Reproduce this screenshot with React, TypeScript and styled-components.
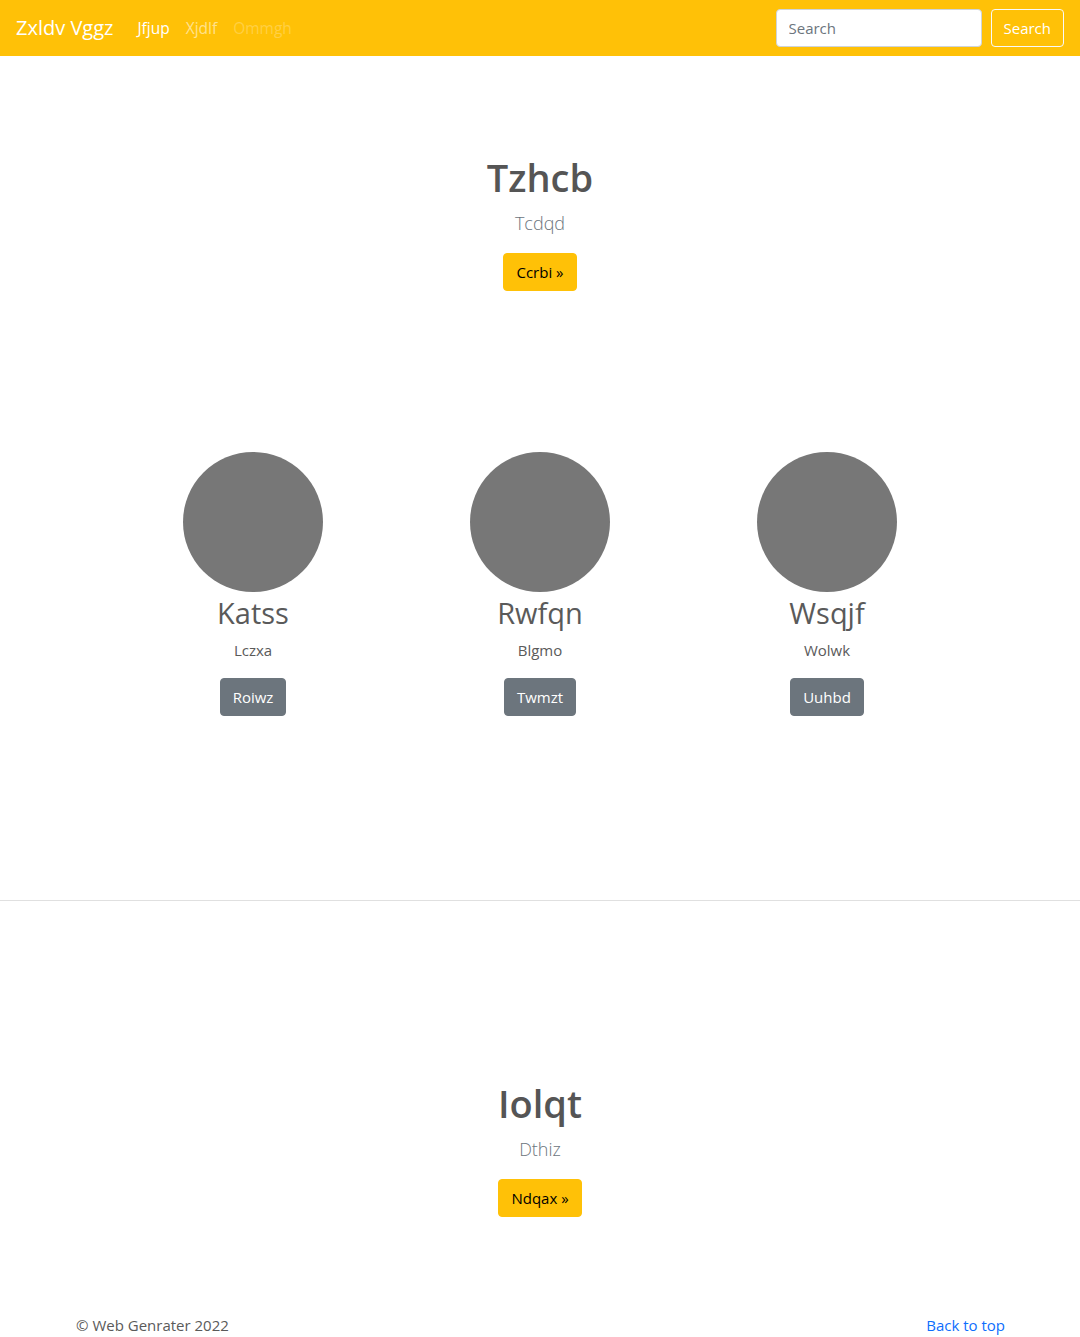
import React from "react";
import styled, { createGlobalStyle } from "styled-components";

const GlobalStyle = createGlobalStyle`
  * { box-sizing: border-box; }
  body {
    margin: 0;
    font-family: "Open Sans", "Noto Sans", sans-serif;
    font-size: 15px;
    line-height: 24px;
    color: #5a5a5a;
    background: #fff;
  }
`;

const Navbar = styled.nav`
  height: 56px;
  background-color: #ffc107;
  display: flex;
  align-items: center;
  justify-content: space-between;
  padding: 0 16px;
`;

const NavLeft = styled.div`
  display: flex;
  align-items: center;
`;

const Brand = styled.a`
  font-size: 20px;
  color: #fff;
  margin-right: 16px;
  text-decoration: none;
  line-height: 30px;
`;

const NavLink = styled.a<{ $state: "active" | "normal" | "disabled" }>`
  padding: 8px;
  font-size: 15.5px;
  text-decoration: none;
  color: ${(p) =>
    p.$state === "active"
      ? "#fff"
      : p.$state === "normal"
      ? "rgba(255,255,255,.55)"
      : "rgba(255,255,255,.25)"};
`;

const SearchForm = styled.form`
  display: flex;
  align-items: center;
  gap: 9px;
`;

const SearchInput = styled.input`
  width: 206px;
  height: 38px;
  padding: 6px 12px;
  font-family: inherit;
  font-size: 15px;
  color: #212529;
  border: 1px solid #ced4da;
  border-radius: 4px;
  background: #fff;
  &::placeholder {
    color: #6c757d;
  }
`;

const OutlineButton = styled.button`
  height: 38px;
  padding: 6px 12px;
  font-family: inherit;
  font-size: 15px;
  color: #fff;
  background: transparent;
  border: 1px solid #f8f9fa;
  border-radius: 4px;
`;

const Hero = styled.section<{ $top: number }>`
  text-align: center;
  padding-top: ${(p) => p.$top}px;
`;

const HeroTitle = styled.h1`
  margin: 0 0 8px;
  font-size: 38px;
  font-weight: 600;
  line-height: 48px;
  color: #555;
`;

const Lead = styled.p`
  margin: 0 0 16px;
  font-size: 18px;
  line-height: 28px;
  font-weight: 300;
  color: #6c757d;
`;

const Button = styled.a<{ $variant: "warning" | "secondary" }>`
  display: inline-block;
  padding: 6px 12px;
  font-size: 15px;
  line-height: 24px;
  border-radius: 4px;
  text-decoration: none;
  border: 1px solid
    ${(p) => (p.$variant === "warning" ? "#ffc107" : "#6c757d")};
  background: ${(p) => (p.$variant === "warning" ? "#ffc107" : "#6c757d")};
  color: ${(p) => (p.$variant === "warning" ? "#000" : "#fff")};
`;

const Features = styled.div`
  display: grid;
  grid-template-columns: repeat(3, 287px);
  justify-content: center;
  margin-top: 161px;
`;

const Feature = styled.div`
  display: flex;
  flex-direction: column;
  align-items: center;
  text-align: center;
`;

const Avatar = styled.div`
  width: 140px;
  height: 140px;
  border-radius: 50%;
  background: #777;
`;

const FeatureTitle = styled.h2`
  margin: 2px 0 6px;
  font-size: 29px;
  font-weight: 400;
  line-height: 38px;
  color: #5a5a5a;
`;

const FeatureText = styled.p`
  margin: 0 0 16px;
`;

const Divider = styled.hr`
  margin: 184px 0 0;
  border: 0;
  border-top: 1px solid #e0e0e0;
`;

const Footer = styled.footer`
  display: flex;
  justify-content: space-between;
  padding: 0 75px 0 76px;
  margin-top: 96px;
`;

const FooterLink = styled.a`
  color: #0d6efd;
  text-decoration: none;
`;

const features = [
  { title: "Katss", text: "Lczxa", btn: "Roiwz" },
  { title: "Rwfqn", text: "Blgmo", btn: "Twmzt" },
  { title: "Wsqjf", text: "Wolwk", btn: "Uuhbd" },
];

export default function App() {
  return (
    <>
      <GlobalStyle />
      <Navbar>
        <NavLeft>
          <Brand href="#">Zxldv Vggz</Brand>
          <NavLink $state="active" href="#">Jfjup</NavLink>
          <NavLink $state="normal" href="#">Xjdlf</NavLink>
          <NavLink $state="disabled">Ommgh</NavLink>
        </NavLeft>
        <SearchForm onSubmit={(e) => e.preventDefault()}>
          <SearchInput type="search" placeholder="Search" />
          <OutlineButton type="submit">Search</OutlineButton>
        </SearchForm>
      </Navbar>

      <Hero $top={97}>
        <HeroTitle>Tzhcb</HeroTitle>
        <Lead>Tcdqd</Lead>
        <Button $variant="warning" href="#">Ccrbi »</Button>
      </Hero>

      <Features>
        {features.map((f) => (
          <Feature key={f.title}>
            <Avatar />
            <FeatureTitle>{f.title}</FeatureTitle>
            <FeatureText>{f.text}</FeatureText>
            <Button $variant="secondary" href="#">{f.btn}</Button>
          </Feature>
        ))}
      </Features>

      <Divider />

      <Hero $top={178}>
        <HeroTitle>Iolqt</HeroTitle>
        <Lead>Dthiz</Lead>
        <Button $variant="warning" href="#">Ndqax »</Button>
      </Hero>

      <Footer>
        <span>© Web Genrater 2022</span>
        <FooterLink href="#">Back to top</FooterLink>
      </Footer>
    </>
  );
}
